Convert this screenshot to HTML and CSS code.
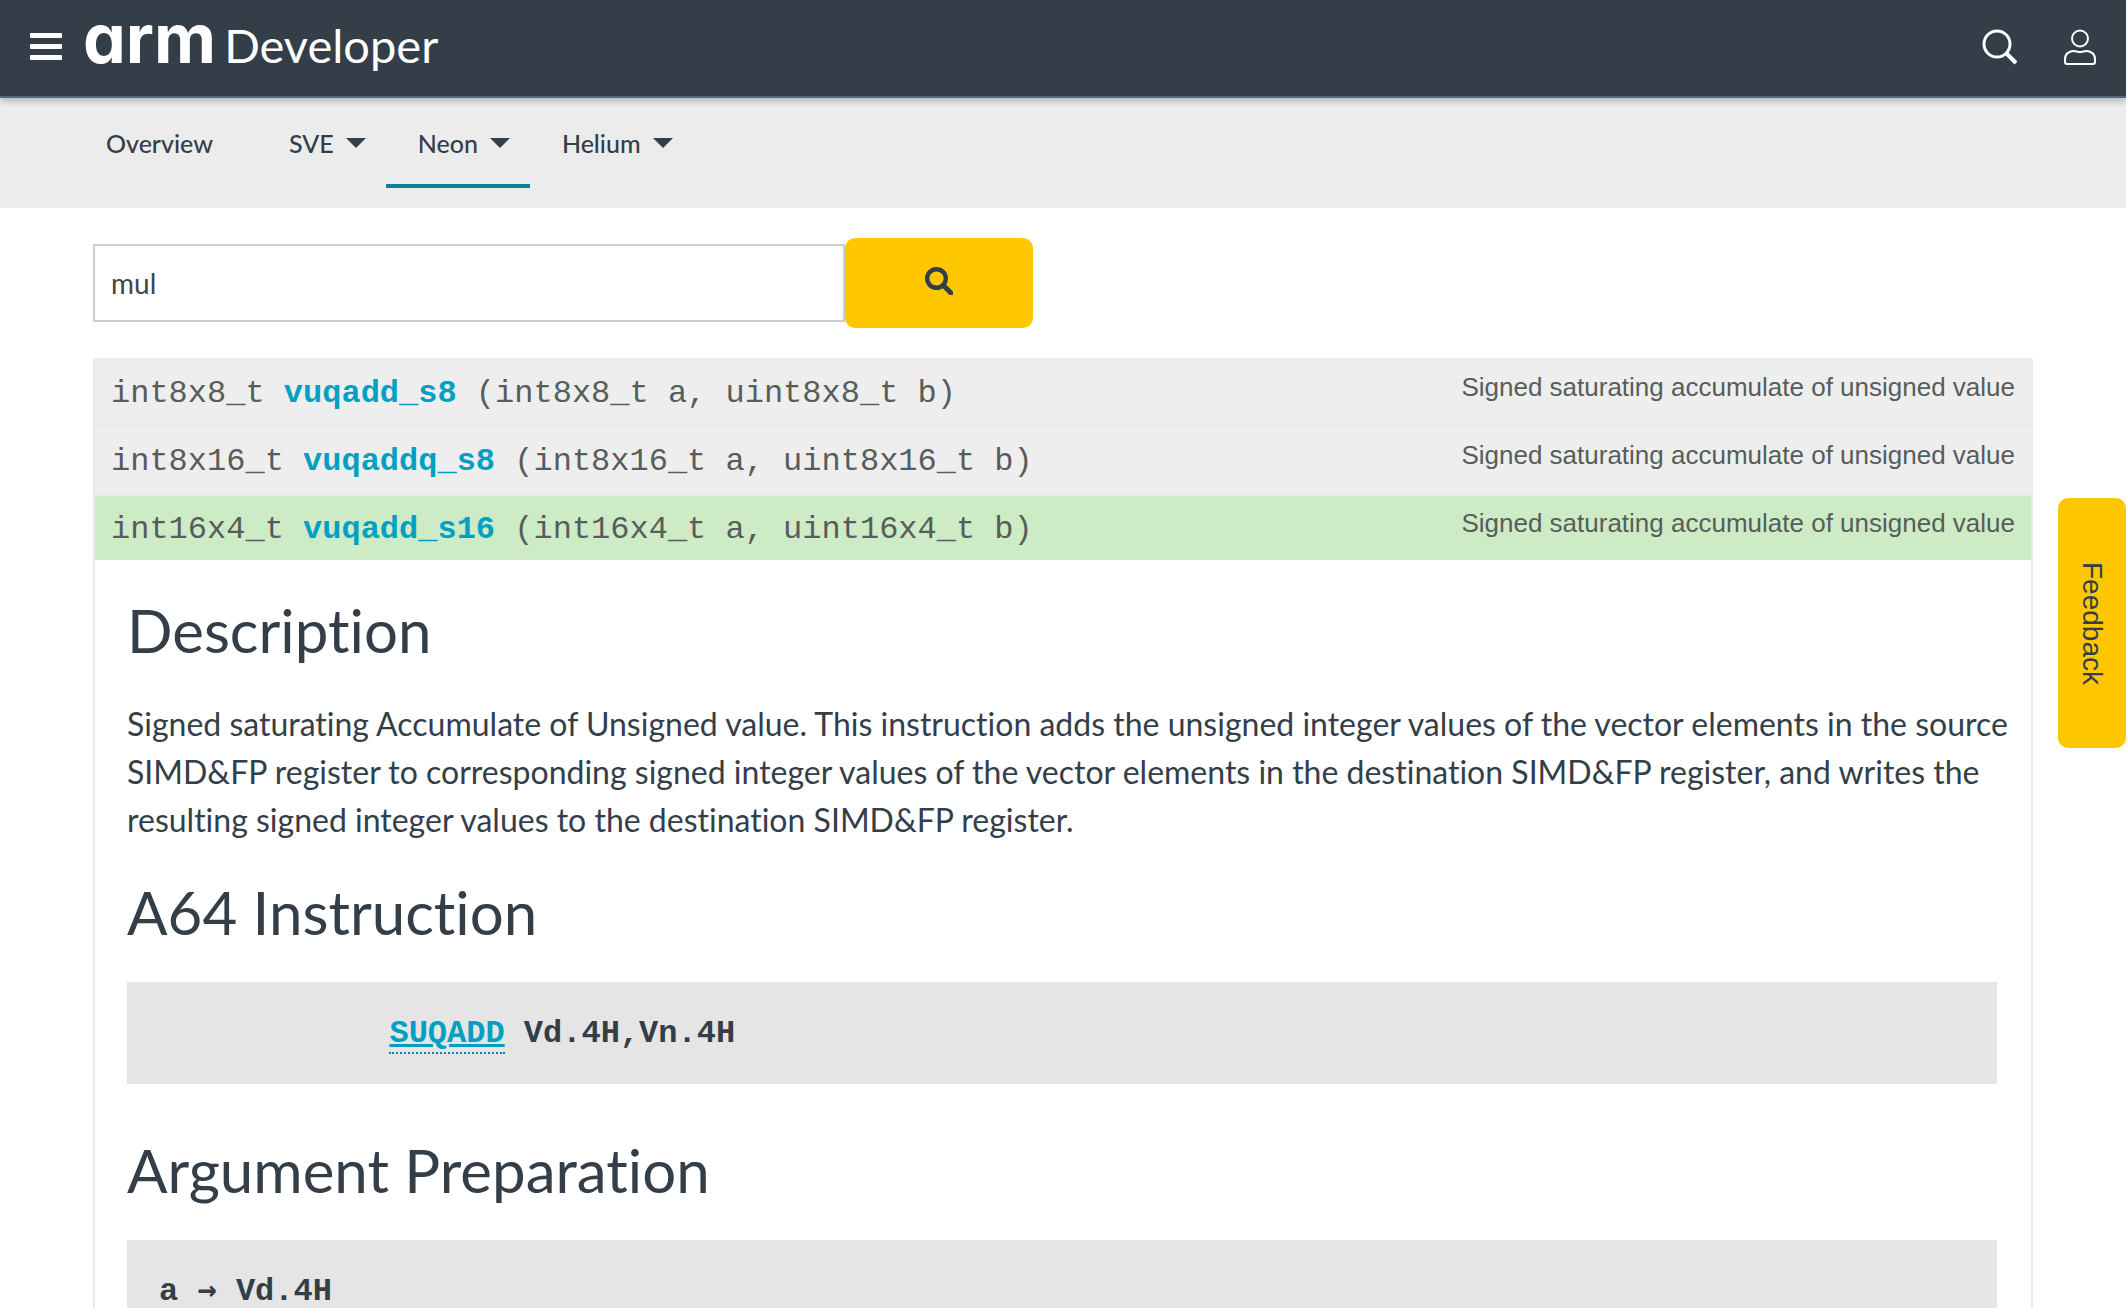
FILE: index.html
```html
<!DOCTYPE html>
<html lang="en">
<head>
<meta charset="utf-8">
<meta name="viewport" content="width=device-width, initial-scale=1">
<title>Arm Developer – Neon intrinsics</title>
<link rel="stylesheet" href="styles.css">
</head>
<body>
<header class="site-header">
  <button class="icon-button" type="button" aria-label="Menu">
    <svg width="32" height="30" viewBox="0 0 32 30" fill="#fff"><rect y="1" width="32" height="5" rx="1"/><rect y="12" width="32" height="5" rx="1"/><rect y="23" width="32" height="5" rx="1"/></svg>
  </button>
  <a class="logo" href="#"><span class="logo-brand">arm</span><span class="logo-product">Developer</span></a>
  <div class="header-tools">
    <button class="icon-button" type="button" aria-label="Search">
      <svg width="38" height="38" viewBox="0 0 38 38" fill="none" stroke="#fff"><circle cx="16" cy="16" r="13" stroke-width="3"/><path d="M25.500 25.500L35 35" stroke-width="4"/></svg>
    </button>
    <button class="icon-button" type="button" aria-label="Account">
      <svg width="34" height="38" viewBox="0 0 34 38" fill="none" stroke="#fff" stroke-width="2"><circle cx="17" cy="10.500" r="8"/><path d="M11 23C6 23 2 26 2 31V34Q2 36 4 36H30Q32 36 32 34V31C32 26 28 23 23 23C21 23 19.500 24 17 24S13 23 11 23Z"/></svg>
    </button>
  </div>
</header>
<nav class="tabs" aria-label="Architecture">
  <a class="tab tab-plain" href="#">Overview</a>
  <a class="tab" href="#">SVE<span class="caret"></span></a>
  <a class="tab tab-active" href="#" aria-current="page">Neon<span class="caret"></span></a>
  <a class="tab" href="#">Helium<span class="caret"></span></a>
</nav>
<main class="content">
  <form class="search" role="search">
    <input class="search-input" type="text" value="mul" aria-label="Search intrinsics">
    <button class="search-submit" type="submit" aria-label="Search">
      <svg width="28" height="28" viewBox="0 0 28 28" fill="none" stroke="#333e48"><circle cx="11.500" cy="11.500" r="9.300" stroke-width="4.400"/><path d="M19 19L26 26" stroke-width="5" stroke-linecap="round"/></svg>
    </button>
  </form>
  <section class="results">
    <div class="result">
      <code class="signature">int8x8_t <b>vuqadd_s8</b> (int8x8_t a, uint8x8_t b)</code>
      <span class="summary">Signed saturating accumulate of unsigned value</span>
    </div>
    <div class="result">
      <code class="signature">int8x16_t <b>vuqaddq_s8</b> (int8x16_t a, uint8x16_t b)</code>
      <span class="summary">Signed saturating accumulate of unsigned value</span>
    </div>
    <div class="result result-open">
      <code class="signature">int16x4_t <b>vuqadd_s16</b> (int16x4_t a, uint16x4_t b)</code>
      <span class="summary">Signed saturating accumulate of unsigned value</span>
    </div>
    <article class="details">
      <h2>Description</h2>
      <p>Signed saturating Accumulate of Unsigned value. This instruction adds the unsigned integer values of the vector elements in the source SIMD&amp;FP register to corresponding signed integer values of the vector elements in the destination SIMD&amp;FP register, and writes the resulting signed integer values to the destination SIMD&amp;FP register.</p>
      <h2>A64 Instruction</h2>
      <pre>            <a class="instruction" href="#">SUQADD</a> Vd.4H,Vn.4H</pre>
      <h2>Argument Preparation</h2>
      <pre>a <span class="arrow">→</span> Vd.4H</pre>
    </article>
  </section>
</main>
<button class="feedback" type="button">Feedback</button>
</body>
</html>
```
FILE: styles.css
```css
* {
  box-sizing: border-box;
}

body {
  margin: 0;
  height: 100vh;
  overflow: hidden;
  color: #333e48;
  background: #fff;
  font-family: Lato, sans-serif;
  font-variant-ligatures: none;
}

button {
  border: 0;
  cursor: pointer;
}

svg {
  display: block;
}

.site-header {
  position: relative;
  display: flex;
  align-items: center;
  height: 98px;
  padding: 0 29px 2px 30px;
  background: #333e48;
  border-bottom: 2px solid #566777;
  box-shadow: 0 4px 6px rgba(0, 0, 0, 0.2);
}

.icon-button {
  padding: 0;
  background: none;
}

.logo {
  display: flex;
  align-items: baseline;
  gap: 8px;
  margin-left: 21px;
  padding-bottom: 12px;
  color: #fff;
  text-decoration: none;
  line-height: 72px;
}

.logo-brand {
  font-family: Inter, sans-serif;
  font-size: 68px;
  font-weight: 700;
  font-feature-settings: "cv11";
}

.logo-product {
  font-size: 47px;
  font-weight: 400;
}

.header-tools {
  display: flex;
  gap: 44px;
  margin-left: auto;
}

.tabs {
  display: flex;
  height: 110px;
  padding: 20px 93px;
  background: #ececec;
}

.tab {
  display: flex;
  align-items: center;
  gap: 12px;
  padding: 0 20px 17px 32px;
  border-bottom: 4px solid transparent;
  color: #333e48;
  font-size: 25px;
  font-weight: 500;
  text-decoration: none;
}

.tab-plain {
  padding-left: 13px;
  padding-right: 44px;
}

.tab-active {
  border-color: #0f7fa0;
}

.caret {
  border: 10px solid transparent;
  border-top-color: #333e48;
  border-bottom: 0;
}

.content {
  padding: 30px 93px 0;
}

.search {
  display: flex;
  align-items: center;
  width: 940px;
  max-width: 100%;
  margin-bottom: 30px;
}

.search-input {
  flex: 1;
  min-width: 0;
  height: 78px;
  padding: 0 16px;
  border: 2px solid #ccc;
  color: #444;
  background: #fff;
  font-family: Lato, sans-serif;
  font-size: 28px;
}

.search-submit {
  display: grid;
  place-items: center;
  width: 188px;
  height: 90px;
  padding: 0 0 4px;
  border-radius: 10px;
  background: #ffc700;
}

.result {
  display: flex;
  justify-content: space-between;
  align-items: flex-start;
  height: 68px;
  padding: 10px 16px;
  border: 2px solid #ebebeb;
  background: #eee;
  color: #575d5a;
}

.result-open {
  height: 66px;
  border-bottom: 0;
  background: #cdebc5;
}

.signature {
  font-family: "Liberation Mono", monospace;
  font-size: 32px;
  line-height: 48px;
}

.signature b {
  color: #00a0c2;
}

.summary {
  font-family: "Liberation Sans", sans-serif;
  font-size: 26px;
  line-height: 34px;
}

.details {
  padding: 34px 34px 34px 32px;
  border: solid #ebebeb;
  border-width: 0 2px;
}

.details h2 {
  margin: 0 0 34px;
  font-size: 60px;
  font-weight: 400;
  line-height: 72px;
}

.details p {
  margin: 0 -24px 32px 0;
  font-size: 32px;
  line-height: 48px;
}

.details pre {
  margin: 0 0 50px;
  padding: 33px 32px 31px;
  background: #e5e5e5;
  font-family: "Liberation Mono", monospace;
  font-size: 32px;
  font-weight: 700;
  line-height: 38px;
}

.instruction {
  border-bottom: 2px dotted #0f7fa0;
  color: #00a0c2;
  text-decoration: underline;
}

.arrow {
  font-family: "DejaVu Sans Mono", monospace;
  line-height: 1;
}

.feedback {
  position: fixed;
  top: 498px;
  right: 0;
  width: 68px;
  height: 250px;
  padding: 0;
  border-radius: 10px;
  background: #ffc700;
  color: #333e48;
  font-family: "Liberation Sans", sans-serif;
  font-size: 28px;
  writing-mode: vertical-rl;
}
```
